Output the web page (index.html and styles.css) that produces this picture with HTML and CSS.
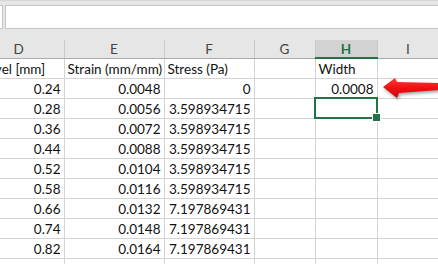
FILE: index.html
```html
<!DOCTYPE html>
<html lang="en">
<head>
  <meta charset="UTF-8">
  <title>Sheet</title>
  <link rel="stylesheet" href="styles.css">
</head>
<body>
  <div class="app">
    <div class="formula-bar">
      <div class="name-box"></div>
      <div class="formula-input"></div>
    </div>

    <div class="sheet">
      <table class="grid">
        <colgroup>
          <col class="col-d">
          <col class="col-e">
          <col class="col-f">
          <col class="col-g">
          <col class="col-h">
          <col class="col-i">
        </colgroup>
        <thead>
          <tr>
            <th>D</th>
            <th>E</th>
            <th>F</th>
            <th>G</th>
            <th class="active">H</th>
            <th>I</th>
          </tr>
        </thead>
        <tbody>
          <tr>
            <td class="text">Travel [mm]</td>
            <td class="text">Strain (mm/mm)</td>
            <td class="text">Stress (Pa)</td>
            <td></td>
            <td class="text">Width</td>
            <td></td>
          </tr>
          <tr>
            <td>0.24</td><td>0.0048</td><td>0</td><td></td><td>0.0008</td><td></td>
          </tr>
          <tr>
            <td>0.28</td><td>0.0056</td><td>3.598934715</td><td></td><td class="selected"></td><td></td>
          </tr>
          <tr>
            <td>0.36</td><td>0.0072</td><td>3.598934715</td><td></td><td></td><td></td>
          </tr>
          <tr>
            <td>0.44</td><td>0.0088</td><td>3.598934715</td><td></td><td></td><td></td>
          </tr>
          <tr>
            <td>0.52</td><td>0.0104</td><td>3.598934715</td><td></td><td></td><td></td>
          </tr>
          <tr>
            <td>0.58</td><td>0.0116</td><td>3.598934715</td><td></td><td></td><td></td>
          </tr>
          <tr>
            <td>0.66</td><td>0.0132</td><td>7.197869431</td><td></td><td></td><td></td>
          </tr>
          <tr>
            <td>0.74</td><td>0.0148</td><td>7.197869431</td><td></td><td></td><td></td>
          </tr>
          <tr>
            <td>0.82</td><td>0.0164</td><td>7.197869431</td><td></td><td></td><td></td>
          </tr>
          <tr>
            <td></td><td></td><td></td><td></td><td></td><td></td>
          </tr>
        </tbody>
      </table>

      <!-- red callout arrow pointing at H3 -->
      <svg class="arrow" width="60" height="30" viewBox="0 0 60 30">
        <defs>
          <linearGradient id="arrowFill" x1="0" y1="0" x2="0" y2="1">
            <stop offset="0" stop-color="#ff3a3a"/>
            <stop offset="0.5" stop-color="#f01010"/>
            <stop offset="1" stop-color="#c80a0a"/>
          </linearGradient>
        </defs>
        <polygon points="2,12 14,3 16,7 58,8 58,15 18,18 16,23" fill="url(#arrowFill)"/>
      </svg>
    </div>
  </div>
</body>
</html>
```

FILE: styles.css
```css
* {
  margin: 0;
  padding: 0;
  box-sizing: border-box;
}

body {
  width: 438px;
  height: 264px;
  overflow: hidden;
  background: #ffffff;
  font-family: Lato, "Liberation Sans", sans-serif;
}

.app {
  width: 438px;
  height: 264px;
  overflow: hidden;
}

.formula-bar {
  display: flex;
  gap: 2px;
  height: 40px;
  padding: 4px 0 11px;
  background: #e6e6e6;
  border-top: 1px solid #d6d6d6;
}

.name-box {
  width: 3px;
  background: #ffffff;
  border: 1px solid #c6c6c6;
  border-left: none;
}

.formula-input {
  flex: 1;
  background: #ffffff;
  border: 1px solid #c6c6c6;
  border-right: none;
}

.sheet {
  position: relative;
  overflow: hidden;
}

.grid {
  margin-left: -26px;
  border-collapse: collapse;
  table-layout: fixed;
  width: 465px;
  font-size: 13.5px;
  color: #111111;
}

.col-d { width: 90px; }
.col-e { width: 100px; }
.col-f { width: 90px; }
.col-g { width: 61px; }
.col-h { width: 62px; }
.col-i { width: 62px; }

.grid th {
  height: 18px;
  background: #e6e6e6;
  color: #444444;
  font-weight: normal;
  font-size: 13.5px;
  text-align: center;
  border-right: 1px solid #c9c9c9;
  border-bottom: 1px solid #ababab;
  padding-top: 1px;
}

.grid th.active {
  background: #d2d2d2;
  color: #217346;
  font-weight: bold;
  border-bottom: 2px solid #217346;
}

.grid td {
  height: 20px;
  padding: 2px 3px 0;
  text-align: right;
  white-space: nowrap;
  overflow: hidden;
  border-right: 1px solid #d4d4d4;
  border-bottom: 1px solid #d4d4d4;
}

.grid td.text {
  text-align: left;
}

.grid td.selected {
  position: relative;
  overflow: visible;
}

.grid td.selected::after {
  content: '';
  position: absolute;
  top: -2px;
  left: -2px;
  right: -1px;
  bottom: -1px;
  border: 2px solid #217346;
}

.grid td.selected::before {
  content: '';
  position: absolute;
  right: -4px;
  bottom: -4px;
  width: 7px;
  height: 7px;
  background: #217346;
  border: 1px solid #ffffff;
  z-index: 1;
}

.arrow {
  position: absolute;
  left: 381px;
  top: 35px;
  filter: drop-shadow(1px 2px 1.5px rgba(0, 0, 0, 0.35));
}
```
